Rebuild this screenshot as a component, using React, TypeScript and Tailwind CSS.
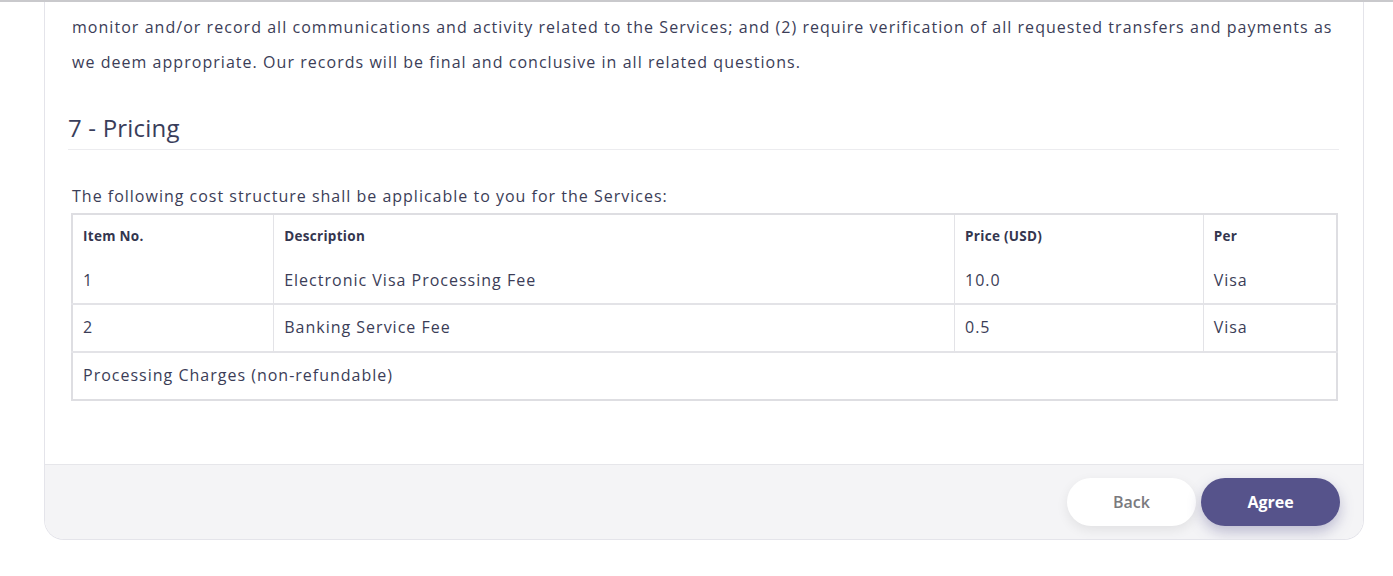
import React from "react";

const rows = [
  { no: "1", desc: "Electronic Visa Processing Fee", price: "10.0", per: "Visa", h: "h-[46px]" },
  { no: "2", desc: "Banking Service Fee", price: "0.5", per: "Visa", h: "h-[48px]" },
];

const App: React.FC = () => {
  return (
    <div
      className="min-h-[576px] bg-white text-[#3b3d57]"
      style={{ fontFamily: '"Open Sans", "Noto Sans", sans-serif' }}
    >
      <div className="h-[2px] w-full bg-[#c9c9cc]" />

      <div className="ml-[44px] w-[1320px] border-x border-b border-[#e4e4ea] rounded-b-[20px] overflow-hidden">
        {/* Body */}
        <div className="pl-[23px] pr-[24px] pt-[8px] pb-[63px]">
          <p className="pl-[4px] text-[16px] leading-[35px] tracking-[1.04px]">
            monitor and/or record all communications and activity related to the Services; and (2) require
            verification of all requested transfers and payments as we deem appropriate. Our records will be
            final and conclusive in all related questions.
          </p>

          <h2 className="mt-[32px] pb-[5px] border-b border-[#ececef] text-[24px] leading-[32px] tracking-[0.2px] text-[#393d5a]">
            7 - Pricing
          </h2>

          <p className="mt-[34px] pl-[4px] text-[16px] leading-[24px] tracking-[1px]">
            The following cost structure shall be applicable to you for the Services:
          </p>

          <table className="mt-[5px] ml-[3px] w-[1267px] border-collapse border-2 border-[#dedee2] text-[16px] tracking-[1px]">
            <colgroup>
              <col className="w-[202px]" />
              <col className="w-[682px]" />
              <col className="w-[249px]" />
              <col className="w-[134px]" />
            </colgroup>
            <thead>
              <tr className="h-[44px] text-[13.5px] font-bold tracking-[0.3px] text-[#34364f]">
                <td className="px-[10px] border-r border-[#e3e3e7]">Item No.</td>
                <td className="px-[10px] border-r border-[#e3e3e7]">Description</td>
                <td className="px-[10px] border-r border-[#e3e3e7]">Price (USD)</td>
                <td className="px-[10px]">Per</td>
              </tr>
            </thead>
            <tbody>
              {rows.map((r) => (
                <tr key={r.no} className={`${r.h} border-b-2 border-[#e3e3e7]`}>
                  <td className="px-[10px] pb-[2px] border-r border-[#e3e3e7]">{r.no}</td>
                  <td className="px-[10px] pb-[2px] border-r border-[#e3e3e7]">{r.desc}</td>
                  <td className="px-[10px] pb-[2px] border-r border-[#e3e3e7]">{r.price}</td>
                  <td className="px-[10px] pb-[2px]">{r.per}</td>
                </tr>
              ))}
              <tr className="h-[48px]">
                <td colSpan={4} className="px-[10px] pb-[2px]">
                  Processing Charges (non-refundable)
                </td>
              </tr>
            </tbody>
          </table>
        </div>

        {/* Footer */}
        <div className="h-[75px] bg-[#f4f4f6] border-t border-[#e6e6ea] flex items-center justify-end gap-[5px] pr-[23px]">
          <button className="w-[129px] h-[48px] rounded-full bg-white text-[16px] font-semibold text-[#7a7a7e] shadow-[0_4px_12px_rgba(0,0,0,0.08)]">
            Back
          </button>
          <button className="w-[139px] h-[48px] rounded-full bg-[#56538b] text-[16px] font-bold text-white shadow-[0_6px_14px_rgba(86,83,139,0.35)]">
            Agree
          </button>
        </div>
      </div>
    </div>
  );
};

export default App;
